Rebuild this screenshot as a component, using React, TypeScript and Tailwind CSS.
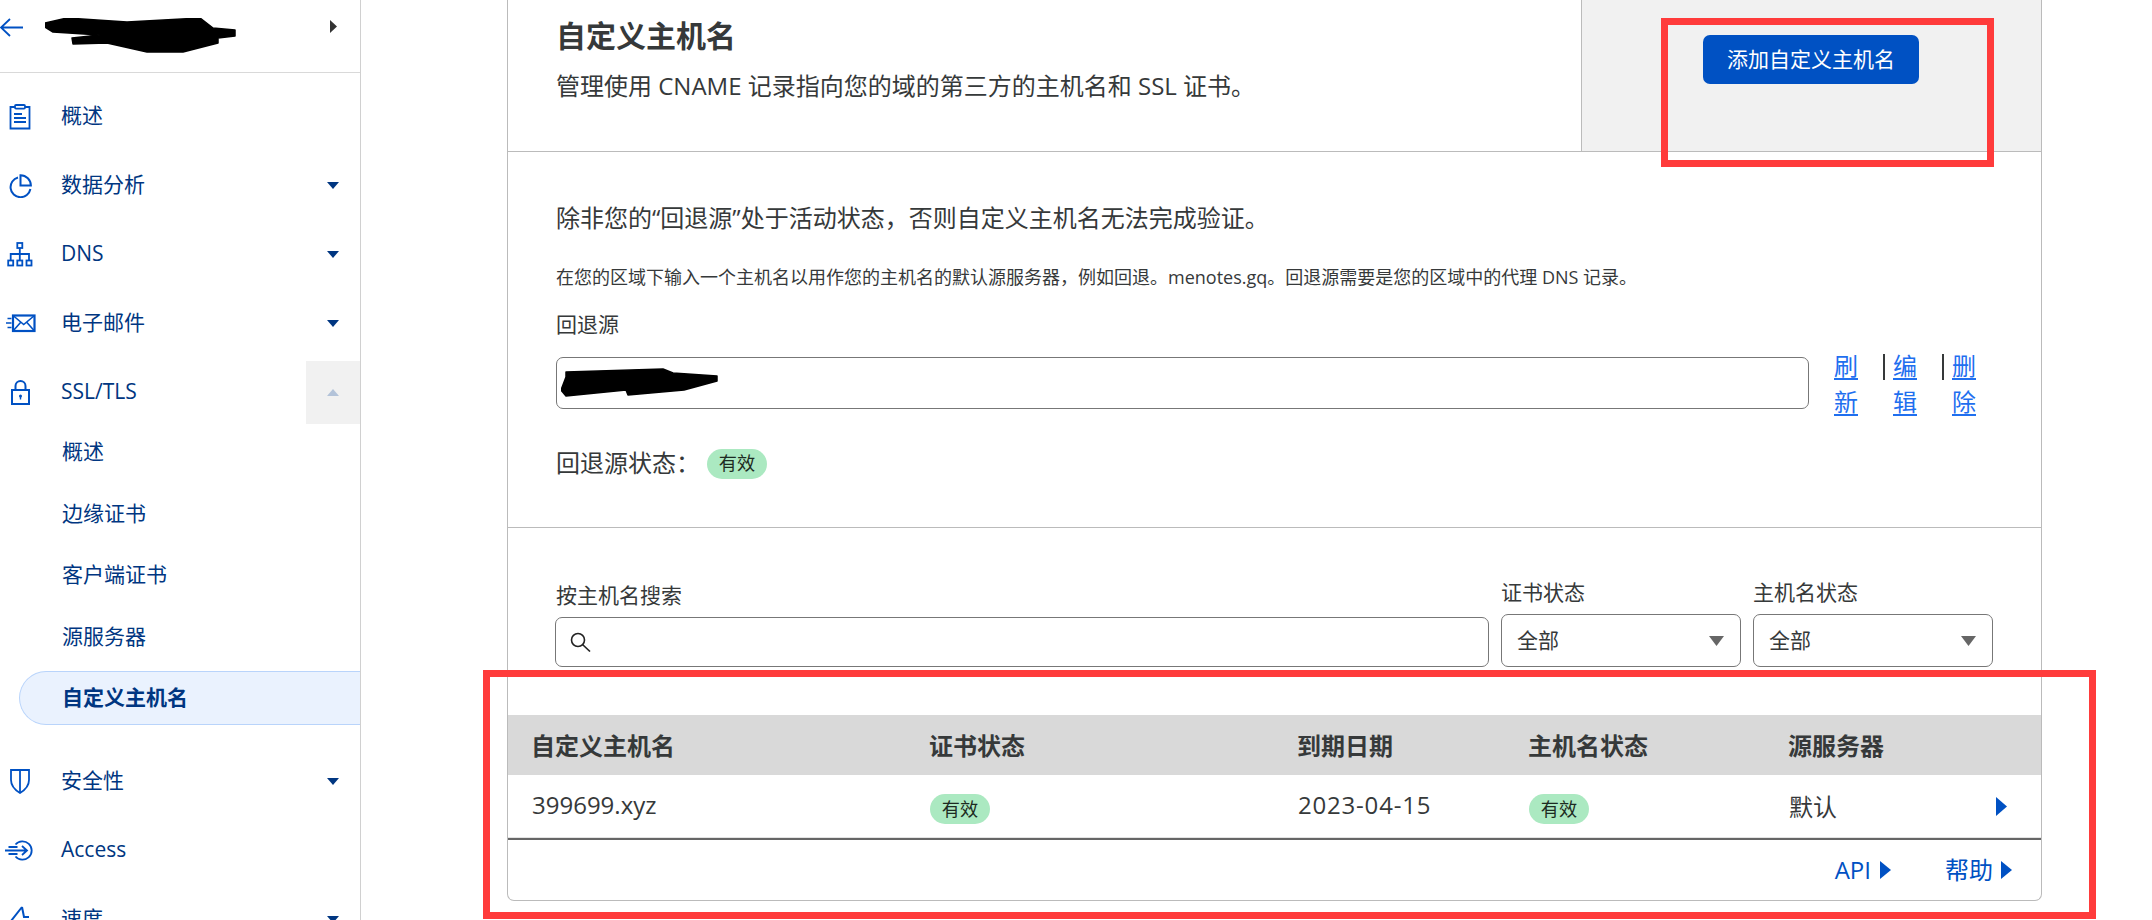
function Tri({ dir, className }: { dir: "down" | "up" | "right"; className: string }) {
  const pts = { down: "0,0 12,0 6,7", up: "0,7 12,7 6,0", right: "0,0 11,9.5 0,19" }[dir];
  const box = dir === "right" ? "0 0 11 19" : "0 0 12 7";
  return (
    <svg viewBox={box} className={className} preserveAspectRatio="none">
      <polygon points={pts} fill="currentColor" />
    </svg>
  );
}

const iconProps = {
  fill: "none",
  stroke: "#0051c3",
  strokeWidth: 1.8,
};

function ClipboardIcon() {
  return (
    <svg width="22" height="26" viewBox="0 0 22 26" {...iconProps}>
      <path d="M6 3H1.500v21.500h19V3H16" />
      <rect x="6" y="1" width="10" height="3.600" rx="1" />
      <path d="M5 10h8M5 14h12M5 18h12" />
    </svg>
  );
}

function PieIcon() {
  return (
    <svg width="24" height="24" viewBox="0 0 24 24" {...iconProps} strokeWidth={2}>
      <path d="M10 3.500a10 10 0 1 0 12.400 11.500" />
      <path d="M12.500 1.200a10.400 10.400 0 0 1 10.400 10.400H12.500z" />
    </svg>
  );
}

function NetworkIcon() {
  return (
    <svg width="26" height="25" viewBox="0 0 26 25" {...iconProps}>
      <rect x="10.300" y="1" width="5" height="5" />
      <rect x="1.200" y="18.500" width="5" height="5" />
      <rect x="10.300" y="18.500" width="5" height="5" />
      <rect x="19.500" y="18.500" width="5" height="5" />
      <path d="M12.800 6v12.500M3.700 18.500V12h18.300v6.500" />
    </svg>
  );
}

function MailIcon() {
  return (
    <svg width="31" height="19" viewBox="0 0 31 19" {...iconProps} strokeWidth={2.2}>
      <rect x="8" y="1.500" width="21.500" height="15.500" />
      <path d="M8 1.500l10.700 9 10.800-9M8 17l8-9M29.500 17l-8-9" strokeWidth={1.600} />
      <path d="M2.500 4.500h4M1 9h5.500M2.500 13.500h4" strokeWidth={1.600} />
    </svg>
  );
}

function LockIcon() {
  return (
    <svg width="19" height="25" viewBox="0 0 19 25" {...iconProps} strokeWidth={2}>
      <rect x="1" y="10" width="17" height="14" />
      <path d="M4.500 10V6a5 5 0 0 1 10 0v4" />
      <circle cx="9.500" cy="16" r="1.500" fill="#0051c3" stroke="none" />
      <path d="M9.500 16v3.500" strokeWidth={1.400} />
    </svg>
  );
}

function ShieldIcon() {
  return (
    <svg width="20" height="25" viewBox="0 0 20 25" {...iconProps}>
      <path d="M1 1h18v10c0 6-4 10-9 13C5 21 1 17 1 11z" />
      <path d="M10 1v23" />
    </svg>
  );
}

function AccessIcon() {
  return (
    <svg width="30" height="21" viewBox="0 0 30 21" {...iconProps}>
      <path d="M10.500 4.500a9.200 9.200 0 1 1 0 12" />
      <path d="M0 10.500H22M17 6l5 4.500-5 4.500M3.500 7h9M3.500 14h9" />
    </svg>
  );
}

function BoltIcon() {
  return (
    <svg width="20" height="26" viewBox="0 0 20 26" {...iconProps} strokeWidth={2}>
      <path d="M12 1L1 15h7l-2 10M12 1l2 10h5" />
    </svg>
  );
}

function NavRow({
  icon,
  label,
  caret,
  hovered,
}: {
  icon: React.ReactNode;
  label: string;
  caret?: boolean;
  hovered?: boolean;
}) {
  return (
    <div className="flex h-[63px] items-center">
      <div className="flex w-[40px] justify-center">{icon}</div>
      <span className="ml-[21px] flex-1 pb-[1px] text-[21px] text-[#003681]">{label}</span>
      {hovered ? (
        <div className="flex h-[63px] w-[54px] items-center justify-center bg-[#f1f1f1]">
          <Tri dir="up" className="h-[7px] w-[12px] text-[#b3c3d9]" />
        </div>
      ) : (
        caret && (
          <div className="flex w-[54px] justify-center">
            <Tri dir="down" className="h-[7px] w-[12px] text-[#003681]" />
          </div>
        )
      )}
    </div>
  );
}

function SubRow({ label, active }: { label: string; active?: boolean }) {
  return (
    <div className="flex h-[61.5px] items-center">
      {active ? (
        <div className="ml-[19px] flex h-[54px] flex-1 items-center rounded-l-[27px] border-y border-l border-[#b9d4fb] bg-[#eaf2fe] pl-[42px] text-[21px] font-bold text-[#003681]">
          {label}
        </div>
      ) : (
        <span className="ml-[62px] text-[21px] text-[#003681]">{label}</span>
      )}
    </div>
  );
}

function Sidebar() {
  return (
    <aside className="h-[920px] w-[361px] shrink-0 border-r border-[#d0d0d0]">
      <div className="flex h-[73px] items-start border-b border-[#d9d9d9] pt-[18px]">
        <svg width="24" height="20" viewBox="0 0 24 20" fill="none" stroke="#0051c3" strokeWidth="1.800">
          <path d="M23 9.500H1M10 1L1 9.500l9 8.500" />
        </svg>
        <svg width="192" height="36" viewBox="0 0 192 36" className="ml-[21px]">
          <path
            d="M0 5L22 0l60 4 73-4 13 10 22 2v6l-17 2v5l-35 9h-36L62 25l-34 1-1-6 28-3-47-3L0 9z"
            fill="#000"
            stroke="#000"
            strokeWidth="1.500"
            strokeLinejoin="round"
          />
        </svg>
        <Tri dir="right" className="ml-[93px] mt-[2px] h-[13px] w-[7px] text-[#333]" />
      </div>
      <nav className="flex flex-col pt-[12px]">
        <div className="flex flex-col gap-[6px]">
          <NavRow icon={<ClipboardIcon />} label="概述" />
          <NavRow icon={<PieIcon />} label="数据分析" caret />
          <NavRow icon={<NetworkIcon />} label="DNS" caret />
          <NavRow icon={<MailIcon />} label="电子邮件" caret />
          <NavRow icon={<LockIcon />} label="SSL/TLS" hovered />
        </div>
        <div className="-mt-[3px] flex flex-col">
          <SubRow label="概述" />
          <SubRow label="边缘证书" />
          <SubRow label="客户端证书" />
          <SubRow label="源服务器" />
          <SubRow label="自定义主机名" active />
        </div>
        <div className="mt-[21px] flex flex-col gap-[6px]">
          <NavRow icon={<ShieldIcon />} label="安全性" caret />
          <NavRow icon={<AccessIcon />} label="Access" />
          <NavRow icon={<BoltIcon />} label="速度" caret />
        </div>
      </nav>
    </aside>
  );
}

function Badge() {
  return (
    <span className="inline-flex h-[30px] w-[60px] items-center justify-center rounded-[15px] bg-[#abe9c1] text-[18.2px] text-[#1d2b22]">
      有效
    </span>
  );
}

function WrapLink({ text }: { text: string }) {
  return <a className="w-[24px] break-all text-[24px] leading-[36px] text-[#1f6fef] underline underline-offset-[3px]">{text}</a>;
}

function Select({ label, className }: { label: string; className: string }) {
  return (
    <div className={`flex flex-col ${className}`}>
      <label className="mb-[8px] text-[21px] leading-[28px] text-[#36393a]">{label}</label>
      <div className="flex h-[53px] items-center justify-between rounded-[7px] border border-[#777] pl-[15px] pr-[16px] text-[21px] text-[#36393a]">
        全部
        <svg width="15" height="10" viewBox="0 0 15 10">
          <polygon points="0,0 15,0 7.500,10" fill="#666" />
        </svg>
      </div>
    </div>
  );
}

const cols = "grid grid-cols-[398px_368px_231px_260px_1fr] items-center";

function HostTable() {
  return (
    <div>
      <div className={`${cols} h-[60px] bg-[#d9d9d9] pl-[23px] pt-[1px] text-[24px] font-bold text-[#36393a]`}>
        <div>自定义主机名</div>
        <div>证书状态</div>
        <div>到期日期</div>
        <div>主机名状态</div>
        <div>源服务器</div>
      </div>
      <div className={`${cols} h-[63px] pl-[24px] text-[24px] text-[#36393a] shadow-[inset_0_-1px_0_#e3e3e3]`}>
        <div className="pb-[3px]">399699.xyz</div>
        <div><Badge /></div>
        <div className="pb-[3px] tracking-[0.8px]">2023-04-15</div>
        <div><Badge /></div>
        <div className="flex items-center justify-between pr-[34px]">
          默认
          <Tri dir="right" className="h-[19px] w-[11px] text-[#0051c3]" />
        </div>
      </div>
      <div className="h-[2px] bg-[#666]" />
      <div className="flex h-[60px] items-center justify-end gap-[54px] pr-[29px] text-[24px] text-[#0051c3]">
        <a className="flex items-center gap-[9px]">
          API
          <Tri dir="right" className="h-[18px] w-[11px]" />
        </a>
        <a className="flex items-center gap-[8px]">
          帮助
          <Tri dir="right" className="h-[18px] w-[11px]" />
        </a>
      </div>
    </div>
  );
}

function Card() {
  return (
    <div className="h-[901px] w-[1535px] rounded-b-[7px] border-x border-b border-[#bbb] text-[#36393a]">
      <div className="flex h-[152px] border-b border-[#bbb]">
        <div className="flex-1 pl-[48px] pt-[16px]">
          <h2 className="text-[30px] font-bold leading-[40px]">自定义主机名</h2>
          <p className="mt-[14px] text-[24px] leading-[32px]">管理使用 CNAME 记录指向您的域的第三方的主机名和 SSL 证书。</p>
        </div>
        <div className="w-[460px] border-l border-[#bbb] bg-[#f1f1f1] pl-[121px] pt-[35px]">
          <button className="h-[49px] w-[216px] rounded-[7px] bg-[#0051c3] text-[21px] text-white">添加自定义主机名</button>
        </div>
      </div>

      <div className="h-[376px] border-b border-[#bbb] pl-[48px] pt-[50px]">
        <p className="text-[24px] leading-[32px]">除非您的“回退源”处于活动状态，否则自定义主机名无法完成验证。</p>
        <p className="mt-[30px] text-[18px] leading-[26px]">
          在您的区域下输入一个主机名以用作您的主机名的默认源服务器，例如回退。menotes.gq。回退源需要是您的区域中的代理 DNS 记录。
        </p>
        <div className="mt-[20px] text-[21px] leading-[28px]">回退源</div>
        <div className="mt-[10px] flex items-start">
          <div className="mt-[9px] flex h-[52px] w-[1253px] items-center rounded-[7px] border border-[#777] pl-[4px]">
            <svg width="158" height="30" viewBox="0 0 158 30">
              <path
                d="M5 4L102 1l10 4 44 3v5l-33 9-56 5-2-5L5 28 0 22l5-13z"
                fill="#000"
                stroke="#000"
                strokeWidth="1.500"
                strokeLinejoin="round"
              />
            </svg>
          </div>
          <div className="ml-[25px] flex items-start">
            <WrapLink text="刷新" />
            <span className="ml-[25px] mr-[8px] mt-[6px] h-[26px] w-[2px] bg-[#36393a]" />
            <WrapLink text="编辑" />
            <span className="ml-[25px] mr-[8px] mt-[6px] h-[26px] w-[2px] bg-[#36393a]" />
            <WrapLink text="删除" />
          </div>
        </div>
        <div className="mt-[29px] flex h-[30px] items-center text-[24px]">
          <span className="w-[151px] pb-[2px]">回退源状态：</span>
          <Badge />
        </div>
      </div>

      <div className="flex items-end pl-[47px] pt-[50px]">
        <div className="flex w-[934px] flex-col">
          <label className="mb-[8px] ml-[1px] text-[21px] leading-[28px]">按主机名搜索</label>
          <div className="flex h-[50px] items-center rounded-[7px] border border-[#777] pl-[14px]">
            <svg width="22" height="20" viewBox="0 0 22 20" fill="none" stroke="#222" strokeWidth="1.600">
              <circle cx="8" cy="8" r="6.500" />
              <path d="M12.500 12.500L20 19.500" />
            </svg>
          </div>
        </div>
        <Select label="证书状态" className="ml-[12px] w-[240px]" />
        <Select label="主机名状态" className="ml-[12px] w-[240px]" />
      </div>

      <div className="mt-[48px]">
        <HostTable />
      </div>
    </div>
  );
}

export default function App() {
  return (
    <div className="relative flex h-[920px] w-[2152px] overflow-hidden bg-white font-['Open_Sans','Noto_Sans_CJK_SC',sans-serif]">
      <Sidebar />
      <main className="pl-[146px]">
        <Card />
      </main>
      {/* red annotation boxes drawn over the screenshot */}
      <div className="pointer-events-none absolute left-[1661px] top-[18px] h-[149px] w-[333px] border-[7px] border-[#ff3b3b]" />
      <div className="pointer-events-none absolute left-[483px] top-[670px] h-[249px] w-[1613px] border-[7px] border-[#ff3b3b]" />
    </div>
  );
}
